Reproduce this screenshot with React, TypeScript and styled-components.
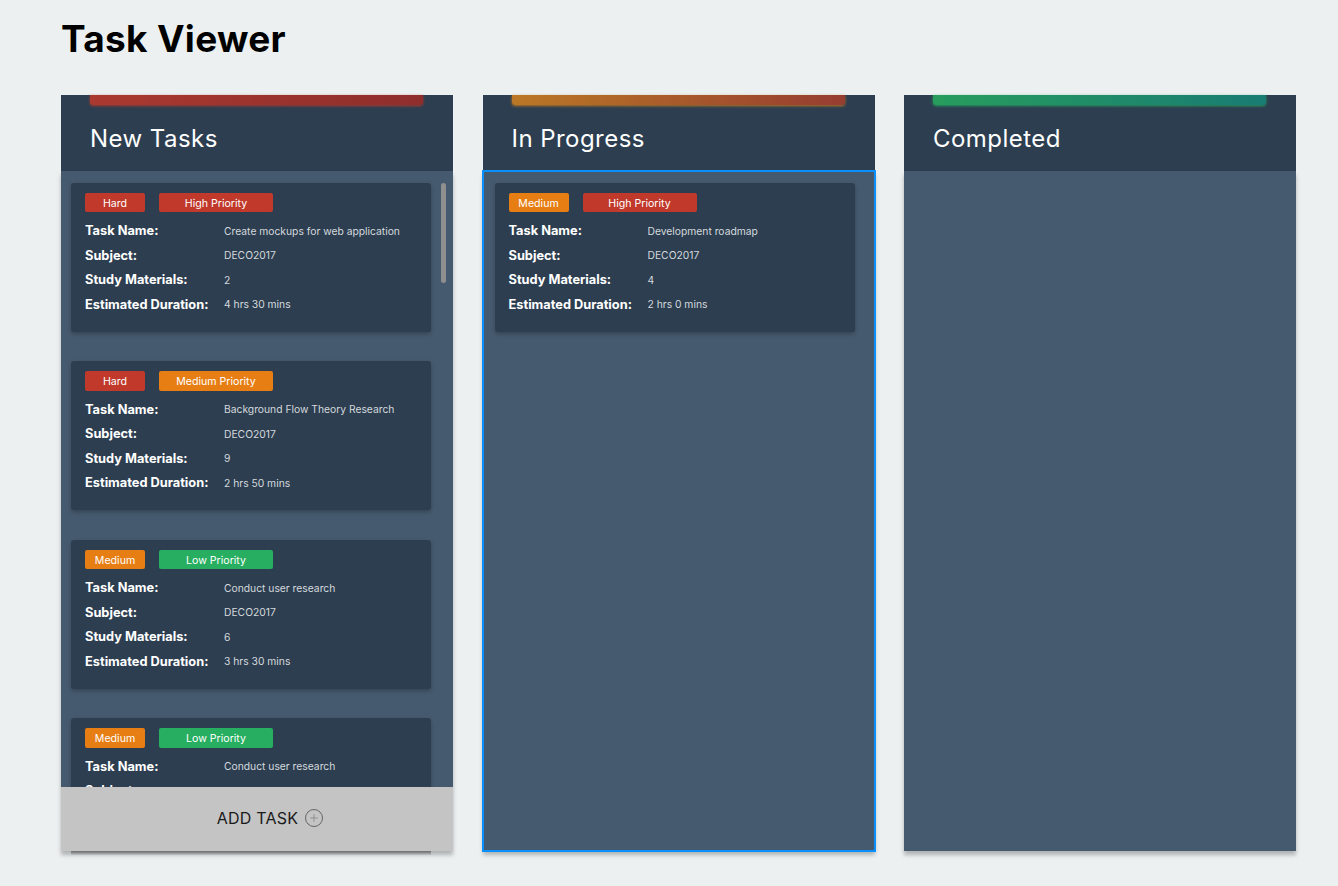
import React from "react";
import styled, { createGlobalStyle } from "styled-components";
import { Plus } from "lucide-react";

const GlobalStyle = createGlobalStyle`
  html, body {
    margin: 0;
    padding: 0;
    height: 100%;
    background: #ecf0f1;
    font-family: "Inter", "Liberation Sans", sans-serif;
  }
`;

const Page = styled.div`
  width: 1338px;
  height: 886px;
  overflow: hidden;
  box-sizing: border-box;
  padding: 0 42px 0 61px;
`;

const Title = styled.h1`
  margin: 0;
  height: 94.5px;
  padding: 17px 0 0;
  box-sizing: border-box;
  font-size: 37px;
  line-height: 44px;
  letter-spacing: 0.3px;
  font-weight: 700;
  color: #000;
`;

const Board = styled.div`
  display: grid;
  grid-template-columns: repeat(3, 392px);
  column-gap: 29.5px;
`;

const Column = styled.section`
  position: relative;
  display: flex;
  flex-direction: column;
  height: 756.5px;
`;

const Header = styled.header`
  height: 76px;
  flex: none;
  box-sizing: border-box;
  background: #2c3e50;
  padding: 0 30px 0 29px;
`;

const Accent = styled.div<{ $from: string; $to: string }>`
  height: 10px;
  border-radius: 0 0 3px 3px;
  background: linear-gradient(90deg, ${({ $from }) => $from}, ${({ $to }) => $to});
  box-shadow: 0 1px 3px ${({ $from }) => $from};
  opacity: 0.85;
`;

const HeaderTitle = styled.h2`
  margin: 17px 0 0;
  font-size: 24px;
  line-height: 34px;
  letter-spacing: 0.45px;
  font-weight: 400;
  color: #fff;
`;

const Body = styled.div<{ $active?: boolean }>`
  flex: 1;
  position: relative;
  overflow: hidden;
  box-sizing: border-box;
  background: #465a6f;
  padding: 12px 0 0 10px;
  box-shadow: 0 4px 4px rgba(0, 0, 0, 0.25);
  ${({ $active }) => $active && `
    outline: 2px solid #0a8fff;
    outline-offset: -1px;
    padding-left: 12px;
  `}
`;

const Card = styled.article`
  width: 360px;
  height: 149px;
  margin-bottom: 29.5px;
  box-sizing: border-box;
  padding: 10px 14px 0;
  border-radius: 3px;
  background: #2c3e50;
  box-shadow: 0 2px 4px rgba(0, 0, 0, 0.25);
`;

const Tags = styled.div`
  display: flex;
  gap: 14px;
  margin-bottom: 6.5px;
`;

const Tag = styled.span<{ $color: string; $wide?: boolean }>`
  width: ${({ $wide }) => ($wide ? 114 : 60)}px;
  height: 19.5px;
  line-height: 21px;
  text-align: center;
  border-radius: 2px;
  font-size: 10.6px;
  color: #fff;
  background: ${({ $color }) => $color};
`;

const Row = styled.div`
  display: flex;
  align-items: center;
  height: 24.5px;
`;

const Label = styled.span`
  width: 139px;
  flex: none;
  font-size: 12.8px;
  font-weight: 700;
  color: #fff;
`;

const Value = styled.span`
  font-size: 10.3px;
  color: #d5d9dd;
`;

const Scrollbar = styled.div`
  position: absolute;
  top: 12px;
  left: 380px;
  width: 5px;
  height: 100px;
  border-radius: 3px;
  background: #8f8f8f;
`;

const AddButton = styled.button`
  position: absolute;
  left: 0;
  right: 0;
  bottom: 0;
  height: 64px;
  display: flex;
  align-items: center;
  justify-content: center;
  gap: 7px;
  padding: 0 0 2px 26px;
  border: 0;
  background: #c4c4c4;
  font: 400 16px "Inter", "Liberation Sans", sans-serif;
  letter-spacing: 0.2px;
  color: #1a1a1a;
`;

const PlusRing = styled.span`
  width: 18px;
  height: 18px;
  box-sizing: border-box;
  display: flex;
  align-items: center;
  justify-content: center;
  border: 1px solid #666;
  border-radius: 50%;
  color: #666;
`;

// shadow of the card that runs on under the add button
const ListShadow = styled.div`
  position: absolute;
  left: 10px;
  bottom: -4px;
  width: 360px;
  height: 4px;
  background: linear-gradient(rgba(50, 50, 50, 0.55), rgba(50, 50, 50, 0.05));
`;

const RED = "#c0392b";
const ORANGE = "#e67e14";
const GREEN = "#27ae60";

type Task = {
  difficulty: string;
  priority: string;
  name: string;
  materials: number;
  duration: string;
};

const difficultyColor = (d: string) => (d === "Hard" ? RED : ORANGE);
const priorityColor = (p: string) =>
  p === "High Priority" ? RED : p === "Medium Priority" ? ORANGE : GREEN;

const newTasks: Task[] = [
  { difficulty: "Hard", priority: "High Priority", name: "Create mockups for web application", materials: 2, duration: "4 hrs 30 mins" },
  { difficulty: "Hard", priority: "Medium Priority", name: "Background Flow Theory Research", materials: 9, duration: "2 hrs 50 mins" },
  { difficulty: "Medium", priority: "Low Priority", name: "Conduct user research", materials: 6, duration: "3 hrs 30 mins" },
  { difficulty: "Medium", priority: "Low Priority", name: "Conduct user research", materials: 6, duration: "3 hrs 30 mins" },
];

const progressTasks: Task[] = [
  { difficulty: "Medium", priority: "High Priority", name: "Development roadmap", materials: 4, duration: "2 hrs 0 mins" },
];

const TaskCard = ({ task }: { task: Task }) => (
  <Card>
    <Tags>
      <Tag $color={difficultyColor(task.difficulty)}>{task.difficulty}</Tag>
      <Tag $wide $color={priorityColor(task.priority)}>{task.priority}</Tag>
    </Tags>
    <Row><Label>Task Name:</Label><Value>{task.name}</Value></Row>
    <Row><Label>Subject:</Label><Value>DECO2017</Value></Row>
    <Row><Label>Study Materials:</Label><Value>{task.materials}</Value></Row>
    <Row><Label>Estimated Duration:</Label><Value>{task.duration}</Value></Row>
  </Card>
);

export default function App() {
  return (
    <Page>
      <GlobalStyle />
      <Title>Task Viewer</Title>
      <Board>
        <Column>
          <Header>
            <Accent $from="#c0392b" $to="#a02c26" />
            <HeaderTitle>New Tasks</HeaderTitle>
          </Header>
          <Body>
            {newTasks.map((t, i) => <TaskCard key={i} task={t} />)}
            <Scrollbar />
            <AddButton>
              ADD TASK
              <PlusRing><Plus size={12} strokeWidth={1} /></PlusRing>
            </AddButton>
          </Body>
          <ListShadow />
        </Column>
        <Column>
          <Header>
            <Accent $from="#d4821e" $to="#a93d2c" />
            <HeaderTitle>In Progress</HeaderTitle>
          </Header>
          <Body $active>
            {progressTasks.map((t, i) => <TaskCard key={i} task={t} />)}
          </Body>
        </Column>
        <Column>
          <Header>
            <Accent $from="#27ae60" $to="#16877a" />
            <HeaderTitle>Completed</HeaderTitle>
          </Header>
          <Body />
        </Column>
      </Board>
    </Page>
  );
}
